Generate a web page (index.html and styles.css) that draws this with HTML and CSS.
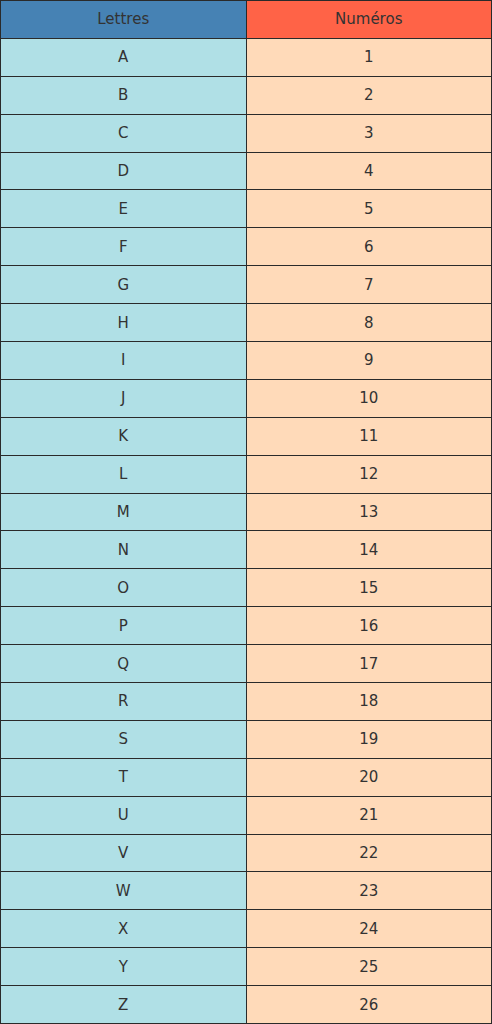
FILE: index.html
```html
<!DOCTYPE html>
<html lang="fr">
<head>
<meta charset="utf-8">
<title>Lettres et numéros</title>
<link rel="stylesheet" href="styles.css">
</head>
<body>
<table class="grid">
<thead>
<tr><th class="h-letters">Lettres</th><th class="h-numbers">Numéros</th></tr>
</thead>
<tbody>
<tr><td class="l">A</td><td class="n">1</td></tr>
<tr><td class="l">B</td><td class="n">2</td></tr>
<tr><td class="l">C</td><td class="n">3</td></tr>
<tr><td class="l">D</td><td class="n">4</td></tr>
<tr><td class="l">E</td><td class="n">5</td></tr>
<tr><td class="l">F</td><td class="n">6</td></tr>
<tr><td class="l">G</td><td class="n">7</td></tr>
<tr><td class="l">H</td><td class="n">8</td></tr>
<tr><td class="l">I</td><td class="n">9</td></tr>
<tr><td class="l">J</td><td class="n">10</td></tr>
<tr><td class="l">K</td><td class="n">11</td></tr>
<tr><td class="l">L</td><td class="n">12</td></tr>
<tr><td class="l">M</td><td class="n">13</td></tr>
<tr><td class="l">N</td><td class="n">14</td></tr>
<tr><td class="l">O</td><td class="n">15</td></tr>
<tr><td class="l">P</td><td class="n">16</td></tr>
<tr><td class="l">Q</td><td class="n">17</td></tr>
<tr><td class="l">R</td><td class="n">18</td></tr>
<tr><td class="l">S</td><td class="n">19</td></tr>
<tr><td class="l">T</td><td class="n">20</td></tr>
<tr><td class="l">U</td><td class="n">21</td></tr>
<tr><td class="l">V</td><td class="n">22</td></tr>
<tr><td class="l">W</td><td class="n">23</td></tr>
<tr><td class="l">X</td><td class="n">24</td></tr>
<tr><td class="l">Y</td><td class="n">25</td></tr>
<tr><td class="l">Z</td><td class="n">26</td></tr>
</tbody>
</table>
</body>
</html>
```
FILE: styles.css
```css
html, body {
  margin: 0;
  padding: 0;
  background: #ffffff;
}
.grid {
  width: 492px;
  border-collapse: collapse;
  table-layout: fixed;
  font-family: "DejaVu Sans", sans-serif;
  font-size: 15px;
  color: #333333;
}
.grid tr {
  height: 37.9px;
}
.grid th, .grid td {
  border: 1px solid #2a2a2a;
  text-align: center;
  vertical-align: middle;
  padding: 0;
  font-weight: normal;
  width: 50%;
}
.h-letters { background: #4682b4; }
.h-numbers { background: #ff6347; }
.l { background: #b0e0e6; }
.n { background: #ffdab9; }
```
